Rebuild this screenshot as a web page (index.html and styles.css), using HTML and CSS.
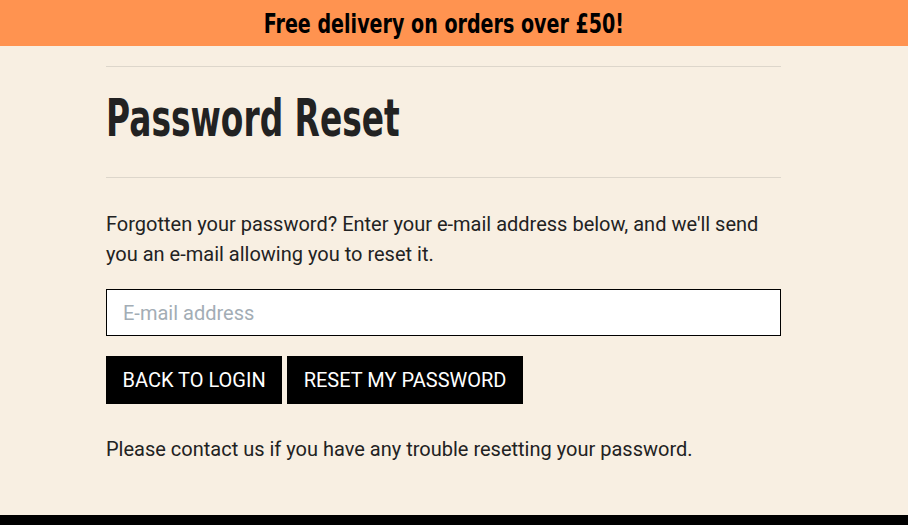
FILE: index.html
```html
<!DOCTYPE html>
<html lang="en">
<head>
<meta charset="utf-8">
<title>Password Reset</title>
<link rel="stylesheet" href="styles.css">
</head>
<body>
<div class="banner"><span class="banner-text">Free delivery on orders over £50!</span></div>
<main class="container">
  <hr class="rule">
  <h1 class="title"><span class="title-text">Password Reset</span></h1>
  <hr class="rule">
  <p class="intro">Forgotten your password? Enter your e-mail address below, and we'll send you an e-mail allowing you to reset it.</p>
  <form class="form">
    <input class="field" type="email" placeholder="E-mail address">
    <div class="actions">
      <a class="btn" href="#">BACK TO LOGIN</a>
      <button class="btn" type="button">RESET MY PASSWORD</button>
    </div>
  </form>
  <p class="note">Please contact us if you have any trouble resetting your password.</p>
</main>
<footer class="footer"></footer>
</body>
</html>
```

FILE: styles.css
```css
* { box-sizing: border-box; }
html, body { margin: 0; padding: 0; }
body {
  background: #f8efe2;
  font-family: Roboto, "Liberation Sans", sans-serif;
  color: #222;
  height: 525px;
  overflow: hidden;
  display: flex;
  flex-direction: column;
}
.banner {
  background: #ff9350;
  height: 46px;
  display: flex;
  align-items: center;
  justify-content: center;
  padding: 1px 21px 0 0;
}
.banner-text {
  display: inline-block;
  font-family: "DejaVu Sans", sans-serif;
  font-weight: bold;
  font-size: 27px;
  color: #000;
  white-space: nowrap;
  transform: scaleX(0.707);
}
.container {
  width: 675px;
  margin: 0 0 0 106px;
  flex: 1;
}
.rule {
  border: 0;
  border-top: 1px solid #ddd6cb;
  margin: 0;
}
.container > .rule:first-child { margin-top: 20px; }
.title {
  font-family: "DejaVu Sans", sans-serif;
  font-weight: bold;
  font-size: 52px;
  line-height: 52px;
  color: #222;
  margin: 0;
  padding: 25px 0 33px;
  white-space: nowrap;
}
.title-text {
  display: inline-block;
  transform: scaleX(0.632);
  transform-origin: left center;
}
.intro {
  font-size: 20px;
  line-height: 30px;
  margin: 31px 0 20px;
  color: #222;
}
.form { margin: 0; }
.field {
  display: block;
  width: 100%;
  height: 47px;
  border: 1px solid #000;
  background: #fff;
  padding: 0 16px;
  font-family: Roboto, sans-serif;
  font-size: 20px;
  color: #222;
  outline: none;
}
.field::placeholder { color: #a3adb5; }
.actions {
  display: flex;
  gap: 5px;
  margin-top: 20px;
}
.btn {
  display: flex;
  align-items: center;
  height: 48px;
  padding: 0 16.5px;
  background: #000;
  color: #fff;
  border: 0;
  font-family: Roboto, sans-serif;
  font-size: 20px;
  text-decoration: none;
  cursor: pointer;
}
.note {
  font-size: 20px;
  line-height: 30px;
  margin: 30px 0 0;
}
.footer {
  height: 10px;
  background: #000;
}
```
